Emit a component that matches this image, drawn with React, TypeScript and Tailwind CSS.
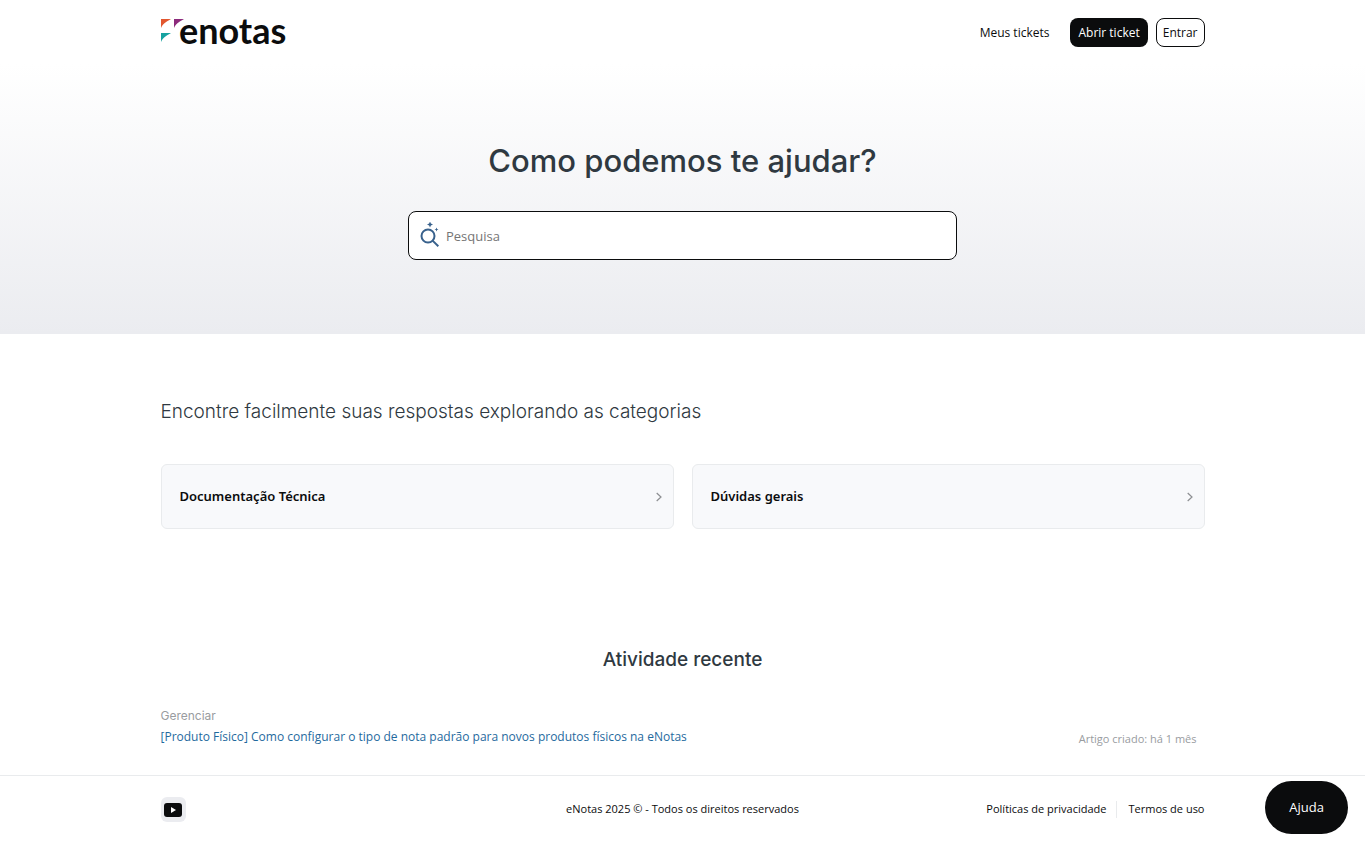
import type { ReactNode } from "react";

const categories = ["Documentação Técnica", "Dúvidas gerais"];

function Container({ children, className = "" }: { children: ReactNode; className?: string }) {
  return <div className={`mx-auto w-full max-w-[1044px] ${className}`}>{children}</div>;
}

function Logo() {
  return (
    <svg width="136" height="52" viewBox="0 -10 136 52" role="img" aria-label="enotas">
      <path d="M0 3h10C7 5 2.500 6.500 0 12z" fill="#e2572f" />
      <path d="M13 3h10c-3 2-7.500 3.500-10 9z" fill="#8c2a7c" />
      <path d="M0 17h10C7 19 2.500 20.500 0 26z" fill="#17a2a0" />
      <text x="18" y="28" fontSize="36" className="fill-[#0b0c0d] font-['Lato',sans-serif] font-bold">
        enotas
      </text>
    </svg>
  );
}

function SearchIcon() {
  return (
    <svg width="20" height="28" viewBox="0 0 20 28" fill="none" aria-hidden="true">
      <circle cx="8" cy="14" r="6.5" stroke="#38618c" strokeWidth="2" />
      <path d="M12.600 18.600l5.700 5.600" stroke="#38618c" strokeWidth="2" />
      <path d="M10 -.5l.9 2.100 2.100.9-2.100.9L10 5.500l-.9-2.100L7 2.500l2.100-.9z" fill="#38618c" />
      <path d="M16.500 5.500l.6 1.400 1.400.6-1.400.6-.6 1.400-.6-1.400-1.400-.6 1.400-.6z" fill="#38618c" />
    </svg>
  );
}

function CategoryCard({ title }: { title: string }) {
  return (
    <a
      href="#"
      className="flex h-[65px] items-center justify-between rounded-md border border-[#e9ebed] bg-[#f8f9fb] pl-[18px] pr-[11px] font-['Noto_Sans',sans-serif] text-[13px] font-semibold text-[#0b0c0d]"
    >
      {title}
      <svg width="6" height="10" viewBox="0 0 6 10" fill="none" stroke="#8d8f92" strokeWidth="1.2" aria-hidden="true">
        <path d="M.7 1l4.300 4L.7 9" />
      </svg>
    </a>
  );
}

export default function App() {
  return (
    <div className="min-h-screen bg-white font-['Open_Sans','Noto_Sans',sans-serif] text-[#0b0c0d]">
      <header>
        <Container className="flex h-16 items-center justify-between">
          <a href="#">
            <Logo />
          </a>
          <nav className="flex items-center gap-2 text-xs">
            <a href="#" className="mr-[13px] pt-0.5">
              Meus tickets
            </a>
            <button className="h-[29px] rounded-lg bg-[#0b0c0d] px-2 pt-0.5 text-white">Abrir ticket</button>
            <button className="h-[29px] rounded-lg border border-[#0b0c0d] px-1.5 pt-0.5">Entrar</button>
          </nav>
        </Container>
      </header>

      <section className="bg-linear-to-b from-white to-[#ebecf0] px-4 pt-[77px] pb-[74px]">
        <h1 className="text-center font-['Inter',sans-serif] text-[31px] leading-10 font-medium text-[#2f3941]">
          Como podemos te ajudar?
        </h1>
        <form className="mx-auto mt-[30px] flex h-[49px] w-full max-w-[549px] items-center gap-1.5 rounded-lg border border-[#0b0c0d] bg-white px-[11px]">
          <SearchIcon />
          <input
            type="search"
            aria-label="Pesquisa"
            placeholder="Pesquisa"
            className="flex-1 bg-transparent pt-0.5 text-[13px] outline-none placeholder:text-[#757575]"
          />
        </form>
      </section>

      <main>
        <Container className="pt-16">
          <h2 className="font-['Inter',sans-serif] text-[19px] leading-7 font-light text-[#2f3941]">
            Encontre facilmente suas respostas explorando as categorias
          </h2>
          <div className="mt-[38px] grid grid-cols-2 gap-[18px]">
            {categories.map((title) => (
              <CategoryCard key={title} title={title} />
            ))}
          </div>
        </Container>

        <Container className="pt-[117px] pb-7">
          <h2 className="text-center font-['Inter',sans-serif] text-[19px] leading-7 font-medium text-[#2f3941]">
            Atividade recente
          </h2>
          <div className="mt-8 flex items-end justify-between">
            <div>
              <h3 className="font-['Inter',sans-serif] text-xs leading-5 text-[#999c9f]">Gerenciar</h3>
              <a href="#" className="block text-xs leading-[21px] text-[#1f6a9e]">
                [Produto Físico] Como configurar o tipo de nota padrão para novos produtos físicos na eNotas
              </a>
            </div>
            <p className="pr-2 text-[11px] leading-4 text-[#999c9f]">Artigo criado: há 1 mês</p>
          </div>
        </Container>
      </main>

      <footer className="border-t border-[#e9ebed]">
        <Container className="grid grid-cols-[1fr_auto_1fr] items-center pt-[21px] pb-6 text-[11px]">
          <a
            href="#"
            aria-label="YouTube"
            className="flex size-[25px] items-center justify-center rounded-md bg-[#ebecf0]"
          >
            <svg width="18" height="14" viewBox="0 0 18 14" aria-hidden="true">
              <rect width="18" height="14" rx="3" fill="#0b0c0d" />
              <path d="M7 4l5 3-5 3z" fill="#fff" />
            </svg>
          </a>
          <p>eNotas 2025 © - Todos os direitos reservados</p>
          <div className="flex items-center justify-end">
            <a href="#" className="border-r border-[#e9ebed] pr-2.5">
              Políticas de privacidade
            </a>
            <a href="#" className="pl-[11px]">
              Termos de uso
            </a>
          </div>
        </Container>
      </footer>

      <button className="fixed right-[17px] bottom-6 h-[53px] rounded-full bg-[#0b0c0d] px-6 text-[13px] text-white">
        Ajuda
      </button>
    </div>
  );
}
